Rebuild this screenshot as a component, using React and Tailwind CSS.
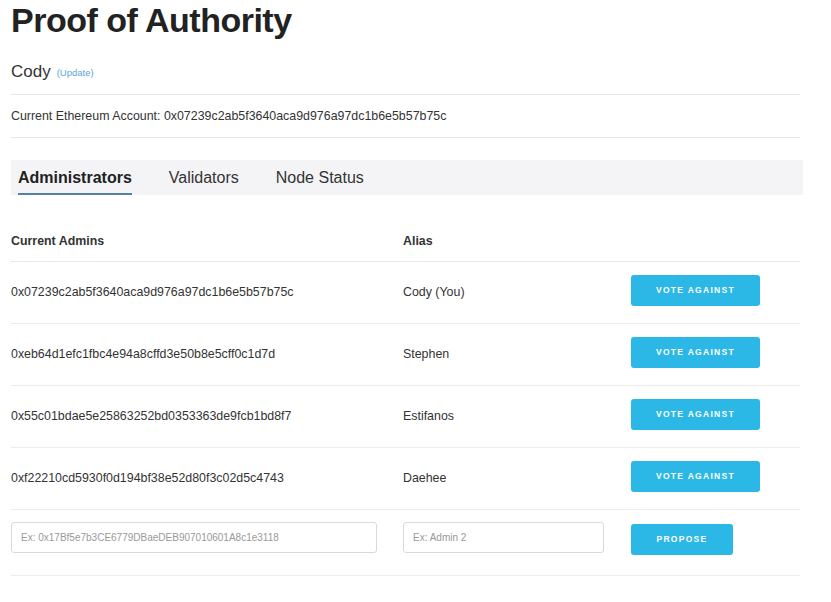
import React from "react";

const admins = [
  ["0x07239c2ab5f3640aca9d976a97dc1b6e5b57b75c", "Cody (You)"],
  ["0xeb64d1efc1fbc4e94a8cffd3e50b8e5cff0c1d7d", "Stephen"],
  ["0x55c01bdae5e25863252bd0353363de9fcb1bd8f7", "Estifanos"],
  ["0xf22210cd5930f0d194bf38e52d80f3c02d5c4743", "Daehee"],
];

function Btn({ children, w }) {
  return (
    <button
      className={`h-[31px] rounded-[3px] bg-[#2bb8e6] text-white text-[8.5px] font-bold tracking-[1.3px] ${w}`}
    >
      {children}
    </button>
  );
}

export default function App() {
  return (
    <div
      className="w-[831px] h-[602px] bg-white text-[#333] overflow-hidden"
      style={{ fontFamily: '"Liberation Sans", Arial, sans-serif' }}
    >
      <div className="pl-[11px] w-[800px]">
        <h1 className="text-[34px] font-bold tracking-[-0.5px] leading-[40px] text-[#222] pt-0">
          Proof of Authority
        </h1>
        <div className="h-[55px] flex items-center pt-[10px] border-b-[1.5px] border-[#e8e8e8]">
          <span className="text-[17px]">Cody</span>
          <span className="text-[9.5px] text-[#5aa5d6] ml-[6px] mt-[3px]">(Update)</span>
        </div>
        <div className="h-[43px] flex items-center text-[12.4px] border-b-[1.5px] border-[#e8e8e8]">
          Current Ethereum Account: 0x07239c2ab5f3640aca9d976a97dc1b6e5b57b75c
        </div>
        <div className="mt-[22px] h-[35px] w-[792px] bg-[#f4f4f6] flex items-stretch pl-[7px] gap-[37px] text-[16px]">
          <div className="flex items-center font-bold text-[#222] border-b-[2px] border-[#5382a6] pt-[2px]">
            Administrators
          </div>
          <div className="flex items-center text-[#333]">Validators</div>
          <div className="flex items-center text-[#333]">Node Status</div>
        </div>
        <div className="mt-[26px] text-[12.4px]">
          <div className="grid grid-cols-[392px_228px_1fr] h-[41px] items-center font-bold border-b-[1.5px] border-[#e8e8e8]">
            <div>Current Admins</div>
            <div>Alias</div>
            <div></div>
          </div>
          {admins.map(([a, n]) => (
            <div
              key={a}
              className="grid grid-cols-[392px_228px_1fr] h-[62px] items-center border-b-[1.5px] border-[#ececec]"
            >
              <div>{a}</div>
              <div>{n}</div>
              <div className="pb-[5px]">
                <Btn w="w-[129px]">VOTE AGAINST</Btn>
              </div>
            </div>
          ))}
          <div className="grid grid-cols-[392px_228px_1fr] h-[66px] items-start pt-[12px] border-b-[1.5px] border-[#ececec]">
            <div>
              <input
                className="w-[366px] h-[31px] border border-[#d9d9d9] rounded-[3px] px-[9px] text-[10px] placeholder:text-[#999] outline-none"
                placeholder="Ex: 0x17Bf5e7b3CE6779DBaeDEB907010601A8c1e3118"
              />
            </div>
            <div>
              <input
                className="w-[201px] h-[31px] border border-[#d9d9d9] rounded-[3px] px-[9px] text-[10px] placeholder:text-[#999] outline-none"
                placeholder="Ex: Admin 2"
              />
            </div>
            <div className="pt-[2px]">
              <Btn w="w-[102px]">PROPOSE</Btn>
            </div>
          </div>
        </div>
      </div>
    </div>
  );
}
